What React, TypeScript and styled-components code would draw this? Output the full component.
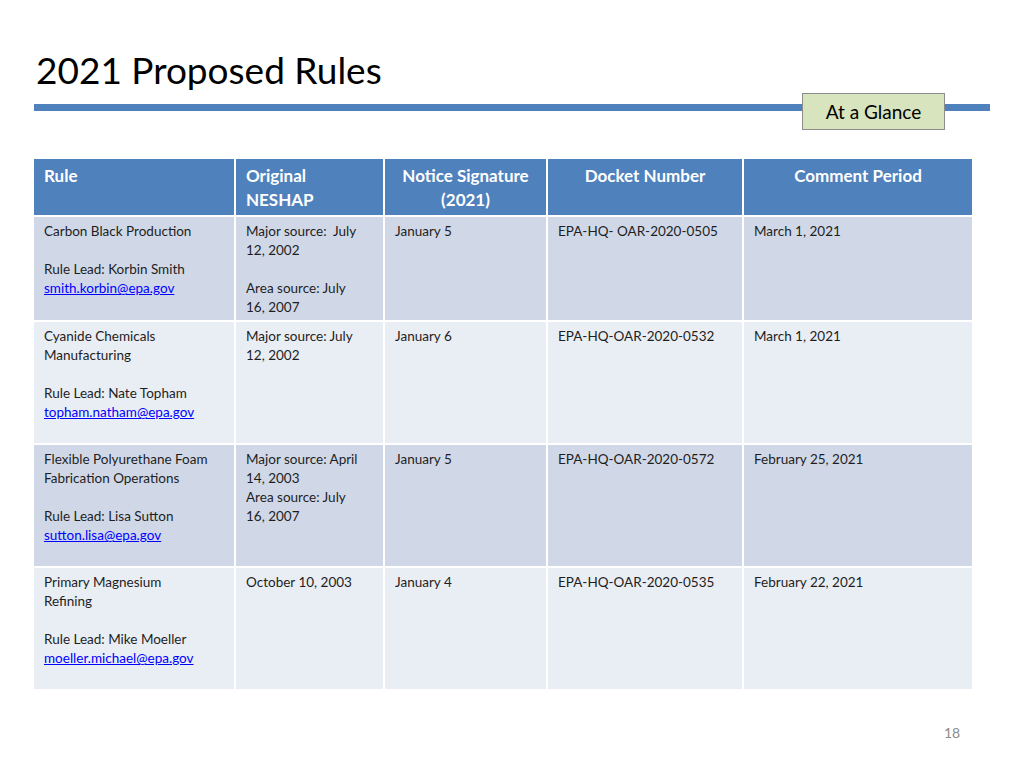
import React from 'react';
import styled, { createGlobalStyle } from 'styled-components';

const Global = createGlobalStyle`
  html, body { margin: 0; background: #fff; }
  body { font-family: Lato, "Open Sans", sans-serif; color: #262626; }
`;

const Slide = styled.div`
  position: relative;
  width: 1024px;
  height: 768px;
  overflow: hidden;
`;
const Title = styled.h1`
  margin: 0;
  padding: 48px 0 0 36px;
  font-size: 37px;
  font-weight: 400;
  line-height: 44px;
  color: #000;
`;
const RuleBar = styled.div`
  margin: 12px 0 0 34px;
  width: 956px;
  height: 7px;
  background: #4f81bd;
  position: relative;
`;
const Glance = styled.div`
  position: absolute;
  left: 768px;
  top: -11px;
  width: 143px;
  height: 37px;
  box-sizing: border-box;
  background: #d7e4bd;
  border: 1px solid #8c8c8c;
  display: flex;
  align-items: center;
  justify-content: center;
  font-size: 19px;
  color: #000;
`;
const Table = styled.div`
  margin: 48px 0 0 34px;
  width: 938px;
  display: grid;
  grid-template-columns: 200px 147px 161px 194px 228px;
  gap: 2px;
  background: #fff;
`;
const Head = styled.div<{ $center?: boolean }>`
  background: #4f81bd;
  color: #fff;
  font-weight: 700;
  font-size: 17px;
  line-height: 24px;
  height: 56px;
  box-sizing: border-box;
  padding: 5px 10px 0;
  text-align: ${p => (p.$center ? 'center' : 'left')};
`;
const Cell = styled.div<{ $shade: 'dark' | 'light' }>`
  background: ${p => (p.$shade === 'dark' ? '#d0d8e8' : '#e9edf4')};
  font-size: 13.5px;
  line-height: 19px;
  padding: 5px 10px 0;
  box-sizing: border-box;
  color: #1e1e1e;
`;
const Mail = styled.a`
  color: #0000ff;
  text-decoration: underline;
`;
const PageNum = styled.div`
  position: absolute;
  left: 944px;
  top: 724px;
  font-size: 14px;
  color: #8b8b8b;
`;

type Row = { rule: React.ReactNode; original: React.ReactNode; notice: string; docket: string; comment: string; h: number; shade: 'dark' | 'light' };

const rows: Row[] = [
  {
    rule: <>Carbon Black Production<br /><br />Rule Lead: Korbin Smith<br /><Mail>smith.korbin@epa.gov</Mail></>,
    original: <>Major source:&nbsp; July<br />12, 2002<br /><br />Area source: July<br />16, 2007</>,
    notice: 'January 5', docket: 'EPA-HQ- OAR-2020-0505', comment: 'March 1, 2021', h: 103, shade: 'dark',
  },
  {
    rule: <>Cyanide Chemicals<br />Manufacturing<br /><br />Rule Lead: Nate Topham<br /><Mail>topham.natham@epa.gov</Mail></>,
    original: <>Major source: July<br />12, 2002</>,
    notice: 'January 6', docket: 'EPA-HQ-OAR-2020-0532', comment: 'March 1, 2021', h: 121, shade: 'light',
  },
  {
    rule: <>Flexible Polyurethane Foam<br />Fabrication Operations<br /><br />Rule Lead: Lisa Sutton<br /><Mail>sutton.lisa@epa.gov</Mail></>,
    original: <>Major source: April<br />14, 2003<br />Area source: July<br />16, 2007</>,
    notice: 'January 5', docket: 'EPA-HQ-OAR-2020-0572', comment: 'February 25, 2021', h: 121, shade: 'dark',
  },
  {
    rule: <>Primary Magnesium<br />Refining<br /><br />Rule Lead: Mike Moeller<br /><Mail>moeller.michael@epa.gov</Mail></>,
    original: <>October 10, 2003</>,
    notice: 'January 4', docket: 'EPA-HQ-OAR-2020-0535', comment: 'February 22, 2021', h: 121, shade: 'light',
  },
];

export default function App() {
  return (
    <Slide>
      <Global />
      <Title>2021 Proposed Rules</Title>
      <RuleBar>
        <Glance>At a Glance</Glance>
      </RuleBar>
      <Table>
        <Head>Rule</Head>
        <Head>Original<br />NESHAP</Head>
        <Head $center>Notice Signature<br />(2021)</Head>
        <Head $center>Docket Number</Head>
        <Head $center>Comment Period</Head>
        {rows.map((r, i) => (
          <React.Fragment key={i}>
            <Cell $shade={r.shade} style={{ height: r.h }}>{r.rule}</Cell>
            <Cell $shade={r.shade}>{r.original}</Cell>
            <Cell $shade={r.shade}>{r.notice}</Cell>
            <Cell $shade={r.shade}>{r.docket}</Cell>
            <Cell $shade={r.shade}>{r.comment}</Cell>
          </React.Fragment>
        ))}
      </Table>
      <PageNum>18</PageNum>
    </Slide>
  );
}
